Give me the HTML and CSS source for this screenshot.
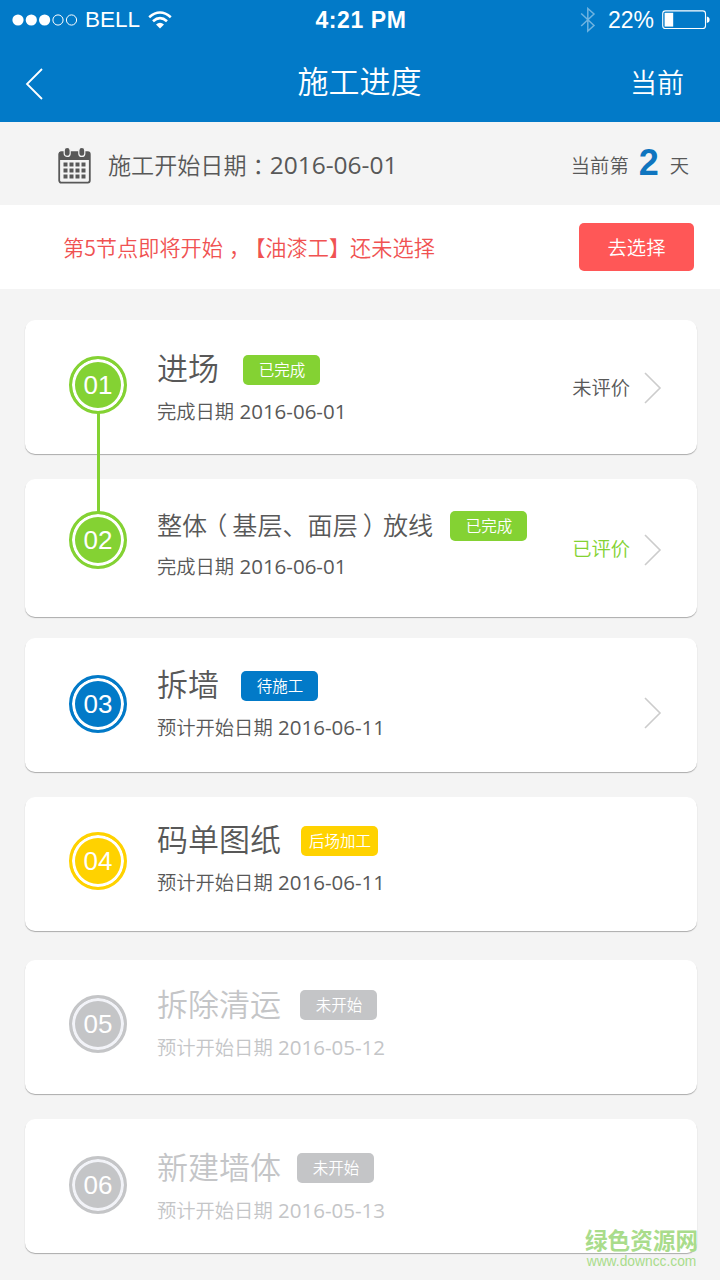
FILE: index.html
```html
<!DOCTYPE html>
<html lang="zh-CN">
<head>
  <meta charset="UTF-8">
  <title>施工进度</title>
  <link rel="stylesheet" href="styles.css">
</head>
<body>

<header>
  <div class="status-bar">
    <div class="status-left">
      <svg width="66" height="12" viewBox="0 0 66 12">
        <g fill="#fff">
          <circle cx="6" cy="6" r="5.6"/>
          <circle cx="19.3" cy="6" r="5.6"/>
          <circle cx="32.6" cy="6" r="5.6"/>
        </g>
        <g fill="none" stroke="#fff" stroke-width="1">
          <circle cx="46" cy="6" r="5.1"/>
          <circle cx="59.5" cy="6" r="5.1"/>
        </g>
      </svg>
      <span class="carrier">BELL</span>
      <svg class="wifi" width="24" height="18" viewBox="0 0 24 18">
        <g fill="none" stroke="#fff" stroke-width="2.6">
          <path d="M1.2 6.2Q12 -3.2 22.8 6.2"/>
          <path d="M5 10.2Q12 4 19 10.2"/>
        </g>
        <path d="M8 13.4Q12 10 16 13.4L12 17.4Z" fill="#fff"/>
      </svg>
    </div>
    <div class="clock">4:21 PM</div>
    <div class="status-right">
      <svg width="16" height="26" viewBox="0 0 16 26">
        <path d="M1.2 6.5L14 18.5L7.8 24V1.5L14 7L1.2 19" fill="none" stroke="#6fb3e0" stroke-width="1.5"/>
      </svg>
      <span class="percent">22%</span>
      <svg width="48" height="20" viewBox="0 0 48 20">
        <rect x=".7" y=".9" width="42.8" height="17.6" rx="2.8" fill="none" stroke="#fff" stroke-width="1.1"/>
        <rect x="2.6" y="2.8" width="8.6" height="13.8" fill="#fff"/>
        <path d="M44.8 6.5Q47.6 7 47.6 9.7T44.8 12.9Z" fill="#fff"/>
      </svg>
    </div>
  </div>
  <div class="nav">
    <svg class="back" width="20" height="32" viewBox="0 0 20 32">
      <path d="M17 1L2 16L17 31" fill="none" stroke="#fff" stroke-width="1.8"/>
    </svg>
    <h1>施工进度</h1>
    <span class="nav-right">当前</span>
  </div>
</header>

<div class="date-bar">
  <svg class="calendar" width="34" height="37" viewBox="0 0 34 37">
    <rect x="1.2" y="5.2" width="30.6" height="30.4" rx="2" fill="none" stroke="#585858" stroke-width="1.8"/>
    <path d="M1 5h31v8H1z" fill="#585858"/>
    <g fill="#585858" stroke="#f4f4f4" stroke-width="1.2">
      <rect x="6.2" y=".4" width="6" height="9" rx="3"/>
      <rect x="20.8" y=".4" width="6" height="9" rx="3"/>
    </g>
    <g stroke="#585858" stroke-width="4" stroke-dasharray="4 2">
      <path d="M5.5 17.5h22M5.5 23.5h22M5.5 29.5h22"/>
    </g>
  </svg>
  <div class="start-date">施工开始日期<span class="mid">：</span><span class="num">2016-06-01</span></div>
  <div class="day">当前第<b>2</b>天</div>
</div>

<div class="alert">
  <p>第5节点即将开始<span class="mid">，</span>【油漆工】还未选择</p>
  <button>去选择</button>
</div>

<main>
  <section class="card card-1 done">
    <div class="step linked">01</div>
    <div class="info">
      <div class="title"><h2>进场</h2><span class="tag">已完成</span></div>
      <p>完成日期 <span class="num">2016-06-01</span></p>
    </div>
    <div class="review">未评价</div>
    <svg class="arrow" width="18" height="32" viewBox="0 0 18 32"><path d="M1 1L16 16L1 31"/></svg>
  </section>

  <section class="card card-2 done">
    <div class="step">02</div>
    <div class="info">
      <div class="title"><h2 class="long">整体<span class="open">（</span>基层、面层<span class="close">）</span>放线</h2><span class="tag">已完成</span></div>
      <p>完成日期 <span class="num">2016-06-01</span></p>
    </div>
    <div class="review reviewed">已评价</div>
    <svg class="arrow" width="18" height="32" viewBox="0 0 18 32"><path d="M1 1L16 16L1 31"/></svg>
  </section>

  <section class="card card-3 waiting">
    <div class="step">03</div>
    <div class="info">
      <div class="title"><h2>拆墙</h2><span class="tag">待施工</span></div>
      <p>预计开始日期 <span class="num">2016-06-11</span></p>
    </div>
    <svg class="arrow" width="18" height="32" viewBox="0 0 18 32"><path d="M1 1L16 16L1 31"/></svg>
  </section>

  <section class="card card-4 backstage">
    <div class="step">04</div>
    <div class="info">
      <div class="title"><h2>码单图纸</h2><span class="tag">后场加工</span></div>
      <p>预计开始日期 <span class="num">2016-06-11</span></p>
    </div>
  </section>

  <section class="card card-5 todo">
    <div class="step">05</div>
    <div class="info">
      <div class="title"><h2>拆除清运</h2><span class="tag">未开始</span></div>
      <p>预计开始日期 <span class="num">2016-05-12</span></p>
    </div>
  </section>

  <section class="card card-6 todo">
    <div class="step">06</div>
    <div class="info">
      <div class="title"><h2>新建墙体</h2><span class="tag">未开始</span></div>
      <p>预计开始日期 <span class="num">2016-05-13</span></p>
    </div>
  </section>
</main>

<div class="watermark">
  <strong>绿色资源网</strong>
  <span>www.downcc.com</span>
</div>

</body>
</html>
```
FILE: styles.css
```css
* {
  box-sizing: border-box;
}
body {
  position: relative;
  width: 720px;
  height: 1280px;
  margin: 0;
  overflow: hidden;
  background: #f4f4f4;
  color: #585858;
  font-family: "Noto Sans CJK SC", sans-serif;
  font-weight: 350;
  text-spacing-trim: space-all;
}
h1, h2, p {
  margin: 0;
  font-weight: 350;
}
.num {
  font-family: "Open Sans", "Noto Sans", sans-serif;
  font-weight: 400;
}
/* pull full-width punctuation to the middle of its cell */
.mid {
  margin: 0 -6px 0 6px;
}
.open {
  margin: 0 5px 0 -5px;
}
.close {
  margin: 0 -5px 0 5px;
}

/* header */
header {
  height: 122px;
  background: #027ac8;
  color: #fff;
}
.status-bar {
  display: grid;
  grid-template-columns: 1fr auto 1fr;
  align-items: center;
  height: 40px;
  padding: 0 10px 0 12px;
  font-family: "Liberation Sans", Arial, sans-serif;
  font-size: 23px;
  font-weight: 400;
}
.status-left,
.status-right {
  display: flex;
  align-items: center;
}
.status-right {
  justify-content: flex-end;
}
.carrier {
  margin-left: 7px;
  font-size: 22.5px;
}
.wifi {
  margin-left: 8px;
}
.clock {
  font-weight: 700;
  letter-spacing: 0.6px;
}
.percent {
  margin: 0 8px 0 12px;
}
.nav {
  display: grid;
  grid-template-columns: 1fr auto 1fr;
  align-items: center;
  height: 82px;
  padding: 0 36px 0 25px;
}
.back {
  margin-top: 5px;
}
.nav h1 {
  margin-left: 10px;
  font-size: 31px;
  line-height: 76px;
  height: 78px;
}
.nav-right {
  justify-self: end;
  padding-top: 1px;
  font-size: 27px;
}

/* start date */
.date-bar {
  display: flex;
  align-items: center;
  height: 83px;
  padding: 0 31px 0 58px;
}
.calendar {
  margin-top: 4px;
}
.start-date {
  margin: 1px auto 0 16px;
  font-size: 23.1px;
}
.start-date .num {
  font-size: 24.5px;
}
.day {
  display: flex;
  align-items: center;
  padding-top: 3px;
  font-size: 19.3px;
}
.day b {
  margin: -5px 11px 0 10px;
  color: #0f75bf;
  font: bold 36px "Liberation Sans", Arial, sans-serif;
}

/* reminder */
.alert {
  display: flex;
  justify-content: space-between;
  align-items: center;
  height: 84px;
  padding: 0 26px 0 63px;
  background: #fff;
}
.alert p {
  margin-top: -2px;
  color: #f05252;
  font-size: 21.2px;
}
.alert button {
  width: 115px;
  height: 48px;
  padding: 0;
  border: 0;
  border-radius: 5px;
  background: #ff5757;
  color: #fff;
  font: inherit;
  font-size: 19.3px;
}

/* progress cards */
main {
  padding: 31px 23px 0 25px;
}
.card {
  display: flex;
  height: 134px;
  margin-bottom: 25px;
  padding: 0 35px 0 44px;
  border-radius: 10px;
  background: #fff;
  box-shadow: 0 1px 1px rgba(0, 0, 0, 0.3);
}
.step {
  position: relative;
  flex: none;
  width: 58px;
  height: 58px;
  border: 3px solid #84d233;
  border-radius: 50%;
  background: #84d233;
  box-shadow: inset 0 0 0 3px #fff;
  color: #fff;
  font: 26px/53px "Liberation Sans", Arial, sans-serif;
  text-align: center;
}
.linked::after {
  content: "";
  position: absolute;
  top: 54px;
  left: 25px;
  width: 3px;
  height: 99px;
  background: #84d233;
}
.info {
  margin-left: 30px;
  margin-right: auto;
}
.title {
  display: flex;
  height: 30px;
}
.title h2 {
  font-size: 31px;
  line-height: 24px;
}
.title .long {
  font-size: 25.1px;
  line-height: 27px;
}
.tag {
  width: 77px;
  height: 30px;
  margin-left: 20px;
  padding-left: 1px;
  border-radius: 5px;
  background: #84d233;
  color: #fff;
  font-size: 15.5px;
  line-height: 29px;
  text-align: center;
}
.info p {
  margin-top: 12px;
  font-size: 19.3px;
  line-height: 29px;
  white-space: nowrap;
}
.info p .num {
  margin-left: 1px;
  font-size: 20.5px;
}
.review {
  height: 30px;
  margin-right: 14px;
  font-size: 19.3px;
  line-height: 28px;
}
.reviewed {
  color: #84d233;
}
.arrow {
  flex: none;
}
.arrow path {
  fill: none;
  stroke: #ccc;
  stroke-width: 1.6;
}

.waiting .step,
.waiting .tag {
  border-color: #027ac8;
  background: #027ac8;
}
.backstage .step,
.backstage .tag {
  border-color: #ffd200;
  background: #ffd200;
}
.todo {
  color: #c4c5c7;
}
.todo .step,
.todo .tag {
  border-color: #c4c5c7;
  background: #c4c5c7;
}
.todo .step {
  box-shadow: inset 0 0 0 3px #f2f3f8;
}

.card-1 .step { margin-top: 36px; }
.card-1 .info { margin-top: 35px; }
.card-1 .tag { margin-left: 24px; }
.card-1 .review { margin-top: 53px; }
.card-1 .arrow { margin-top: 52px; }

.card-2 { height: 138px; margin-bottom: 21px; }
.card-2 .step { margin-top: 32px; }
.card-2 .info { margin-top: 32px; }
.card-2 .tag { margin-left: 17px; }
.card-2 .info p { margin-top: 11px; }
.card-2 .review { margin-top: 55px; }
.card-2 .arrow { margin-top: 55px; }

.card-3 .step { margin-top: 37px; }
.card-3 .info { margin-top: 33px; }
.card-3 .tag { margin-left: 22px; }
.card-3 .arrow { margin-top: 59px; }

.card-4 { margin-bottom: 29px; }
.card-4 .step { margin-top: 35px; }
.card-4 .info { margin-top: 29px; }

.card-5 .step { margin-top: 35px; }
.card-5 .info { margin-top: 30px; }
.card-5 .title h2 { line-height: 26px; }
.card-5 .tag { margin-left: 19px; }
.card-5 .info p { margin-top: 13px; }

.card-6 .step { margin-top: 37px; }
.card-6 .info { margin-top: 34px; }
.card-6 .title h2 { line-height: 26px; }
.card-6 .tag { margin-left: 16px; }
.card-6 .info p { margin-top: 13px; }

/* site mark over the last card */
.watermark {
  position: absolute;
  right: 22px;
  bottom: 10px;
  display: flex;
  flex-direction: column;
  align-items: center;
  color: #a9dc8b;
}
.watermark strong {
  font-size: 22.6px;
  font-weight: 700;
  line-height: 26px;
}
.watermark span {
  font: 13.8px/17px "Liberation Sans", Arial, sans-serif;
}
```
